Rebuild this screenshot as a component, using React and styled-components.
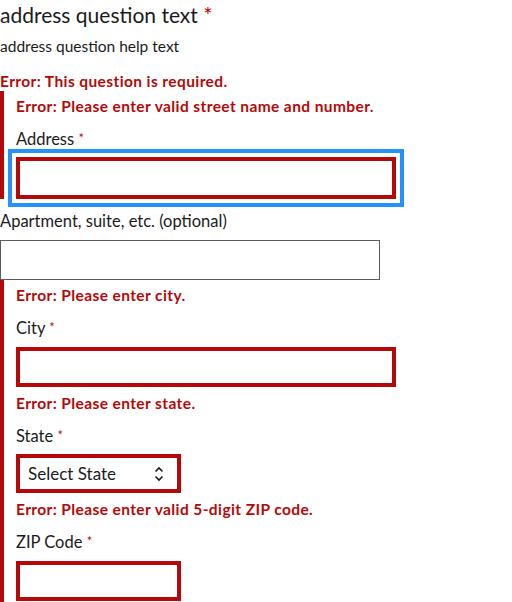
import React from "react";
import styled, { createGlobalStyle } from "styled-components";

const GlobalStyle = createGlobalStyle`
  html, body {
    margin: 0;
    padding: 0;
    background: #ffffff;
  }
  body {
    font-family: "Lato", "Liberation Sans", sans-serif;
    color: #1b1b1b;
  }
`;

const fields = [
  { id: "city", error: "Error: Please enter city.", label: "City", width: 380 },
  { id: "state", error: "Error: Please enter state.", label: "State", select: true },
  { id: "zip", error: "Error: Please enter valid 5-digit ZIP code.", label: "ZIP Code", width: 165 },
];

const App = () => {
  return (
    <>
      <GlobalStyle />
      <Fieldset>
        <Legend>
          address question text <Star>*</Star>
        </Legend>
        <Hint>address question help text</Hint>
        <QuestionError>Error: This question is required.</QuestionError>

        <ErrorGroup>
          <ErrorMessage>Error: Please enter valid street name and number.</ErrorMessage>
          <Label>
            Address <SmallStar>*</SmallStar>
          </Label>
          <TextInput $error $focused $width={380} />
        </ErrorGroup>

        <PlainLabel>Apartment, suite, etc. (optional)</PlainLabel>
        <TextInput $width={380} />

        <ErrorGroup $last>
          {fields.map((f, i) => (
            <FieldBlock key={f.id} $first={i === 0}>
              <ErrorMessage>{f.error}</ErrorMessage>
              <Label>
                {f.label} <SmallStar>*</SmallStar>
              </Label>
              {f.select ? (
                <SelectBox>
                  <span>Select State</span>
                  <svg width="10" height="16" viewBox="0 0 10 16" fill="none">
                    <path d="M1.5 5.5L5 2L8.5 5.5" stroke="#1b1b1b" strokeWidth="1.6" />
                    <path d="M1.5 10.5L5 14L8.5 10.5" stroke="#1b1b1b" strokeWidth="1.6" />
                  </svg>
                </SelectBox>
              ) : (
                <TextInput $error $width={f.width} />
              )}
            </FieldBlock>
          ))}
        </ErrorGroup>
      </Fieldset>
    </>
  );
};

const Fieldset = styled.div`
  display: flex;
  flex-direction: column;
  align-items: flex-start;
  width: 512px;
`;

const Legend = styled.div`
  font-size: 21px;
  line-height: 28px;
  margin-top: 1px;
`;

const Star = styled.span`
  color: #b50909;
  font-size: 22px;
`;

const SmallStar = styled.span`
  color: #b50909;
  font-size: 13px;
  vertical-align: top;
  position: relative;
  top: -1px;
`;

const Hint = styled.div`
  font-size: 15.5px;
  line-height: 20px;
  margin-top: 7px;
`;

const QuestionError = styled.div`
  font-size: 15.5px;
  font-weight: 700;
  letter-spacing: 0.4px;
  line-height: 20px;
  color: #b50909;
  margin-top: 15px;
`;

const ErrorGroup = styled.div`
  display: flex;
  flex-direction: column;
  align-items: flex-start;
  align-self: stretch;
  border-left: 4px solid #b50909;
  padding-left: 12px;
  padding-top: 5px;
  padding-bottom: ${(p) => (p.$last ? "8px" : "0")};
`;

const FieldBlock = styled.div`
  display: flex;
  flex-direction: column;
  align-items: flex-start;
  margin-top: ${(p) => (p.$first ? "0" : "6px")};
`;

const ErrorMessage = styled.div`
  font-size: 15.5px;
  font-weight: 700;
  letter-spacing: 0.4px;
  line-height: 20px;
  color: #b50909;
`;

const Label = styled.div`
  font-size: 16.5px;
  line-height: 20px;
  margin-top: 13px;
`;

const PlainLabel = styled(Label)`
  margin-top: 12px;
`;

const TextInput = styled.input`
  box-sizing: border-box;
  display: block;
  width: ${(p) => p.$width}px;
  height: ${(p) => (p.$focused ? "42px" : "40px")};
  margin-top: ${(p) => (p.$focused ? "8px" : "9px")};
  padding: 0 8px;
  background: #ffffff;
  border: ${(p) => (p.$error ? "4px solid #b50909" : "1px solid #565c65")};
  border-radius: 0;
  outline: ${(p) => (p.$focused ? "4px solid #2491ff" : "none")};
  outline-offset: 4px;
  font-family: inherit;
  font-size: 16px;
`;

const SelectBox = styled.div`
  box-sizing: border-box;
  display: flex;
  align-items: center;
  justify-content: space-between;
  width: 165px;
  height: 39px;
  margin-top: 8px;
  padding: 0 13px 0 8px;
  border: 4px solid #b50909;
  font-size: 17px;
  color: #1b1b1b;
`;

export default App;
